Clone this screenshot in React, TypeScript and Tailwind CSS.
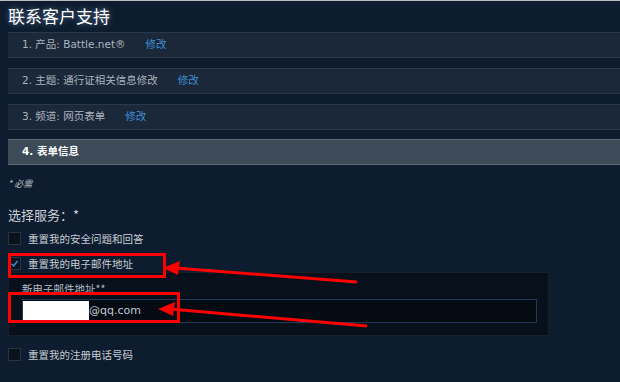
import React from 'react';

const font = { fontFamily: '"Noto Sans CJK SC", "Noto Sans", sans-serif' };
const rowFont = { fontFamily: '"DejaVu Sans", "Noto Sans CJK SC", sans-serif' };

function StepRow({ label, edit }: { label: string; edit?: boolean }) {
  return (
    <div
      className="flex h-[26px] items-center border-y border-y-[#2b3847] bg-[#1b2839] pl-[14px] text-[10.5px] text-[#aab4bf]"
      style={rowFont}
    >
      <span>{label}</span>
      {edit && <span className="ml-[20px] text-[#3f8fd6]">修改</span>}
    </div>
  );
}

function Check({ label, checked }: { label: string; checked?: boolean }) {
  return (
    <div className="flex h-[25px] items-center">
      <div className="flex h-[13px] w-[13px] items-center justify-center border border-[#27333f] bg-[#0a131d]">
        {checked && (
          <svg width="9" height="9" viewBox="0 0 9 9">
            <path d="M1.5 4.8 L3.6 6.8 L7.6 2" fill="none" stroke="#3a8ad0" strokeWidth="1.5" />
          </svg>
        )}
      </div>
      <span className="ml-[7px] text-[10.5px] text-[#c5ccd3]">{label}</span>
    </div>
  );
}

export default function App() {
  return (
    <div
      className="relative h-[382px] w-[620px] overflow-hidden bg-[#0d1c2e]"
      style={font}
    >
      <div className="h-px bg-[#b9bcc0]" />
      <div className="h-[31px] pl-[8px] pt-[2px] text-[17px] leading-[26px] text-white [text-shadow:0_0_6px_rgba(160,200,255,0.55)]">
        联系客户支持
      </div>
      <div className="flex flex-col gap-[10px] pl-[8px]">
        <StepRow label="1. 产品: Battle.net®" edit />
        <StepRow label="2. 主题: 通行证相关信息修改" edit />
        <StepRow label="3. 频道: 网页表单" edit />
        <div
          className="-mt-[1px] flex h-[26px] items-center border-y border-y-[#5b6773] bg-[#3d4a57] pl-[14px] text-[10.5px] font-bold text-white"
          style={rowFont}
        >
          4. 表单信息
        </div>
      </div>
      <div className="pl-[8px]">
        <div className="mt-[11px] h-[16px] text-[9px] italic leading-[16px] text-[#c0c7ce]">* 必需</div>
        <div className="mt-[13px] h-[20px] text-[13px] leading-[20px] text-[#c9d0d7]">选择服务：*</div>
        <div className="mt-[1px]">
          <Check label="重置我的安全问题和回答" />
          <Check label="重置我的电子邮件地址" checked />
        </div>
        <div className="mt-[-4px] h-[64px] w-[541px] border border-[#151f2a] bg-[#08111b] px-[13px] pt-[8px]">
          <div className="h-[16px] text-[10.5px] leading-[16px] text-[#b3bcc5]">新电子邮件地址**</div>
          <div className="mt-[2px] flex h-[24px] w-[515px] items-center border border-[#1d3a5a] bg-[#050b13]">
            <div className="h-[20px] w-[66px] bg-white" />
            <span className="text-[11px] text-[#c0c8d0]" style={rowFont}>
              @qq.com
            </span>
          </div>
        </div>
        <div className="mt-[6px]">
          <Check label="重置我的注册电话号码" />
        </div>
      </div>

      {/* annotations */}
      <div className="absolute left-[8px] top-[253px] h-[25px] w-[158px] border-[3px] border-[#ff0000]" />
      <div className="absolute left-[8px] top-[292px] h-[31px] w-[172px] border-[3px] border-[#ff0000]" />
      <svg className="absolute left-0 top-0" width="620" height="382" viewBox="0 0 620 382">
        <line x1="357" y1="282" x2="175" y2="268" stroke="#ff0000" strokeWidth="3" />
        <polygon points="163,268 180,261 178,275" fill="#ff0000" />
        <line x1="367" y1="326" x2="170" y2="309" stroke="#ff0000" strokeWidth="3" />
        <polygon points="158,309 175,302 173,316" fill="#ff0000" />
      </svg>
    </div>
  );
}
